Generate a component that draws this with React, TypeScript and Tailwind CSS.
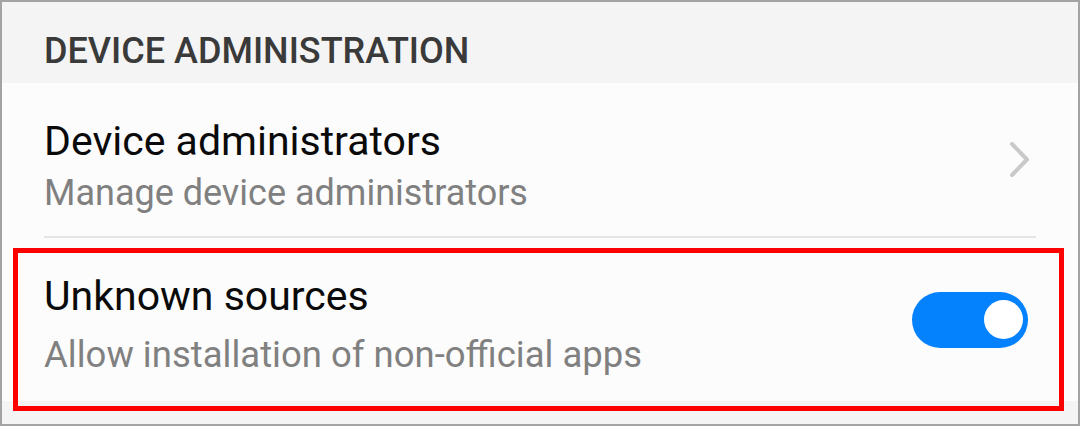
const FONT_CLASSNAME = "font-['Roboto','Noto_Sans',sans-serif]"

const ROW_TITLE_CLASSNAME = 'text-[41px] leading-[48px] text-[#0a0a0a]'

const ROW_SUBTITLE_CLASSNAME = 'leading-[44px] text-[#808080]'

function Chevron() {
  return (
    <svg width="19" height="35" viewBox="0 0 19 35" fill="none" className="mr-[7px] shrink-0">
      <polyline
        points="2,2 17,17.5 2,33"
        stroke="#c9c9c9"
        strokeWidth="4"
        strokeLinecap="round"
        strokeLinejoin="round"
      />
    </svg>
  )
}

function Toggle(props: { on: boolean }) {
  return (
    <div
      className={`mr-[8px] flex h-[56px] w-[116px] shrink-0 items-center rounded-full pr-[5px] ${
        props.on ? 'justify-end bg-[#0481fc]' : 'justify-start bg-[#c8c8c8]'
      }`}
    >
      <div className="h-[39px] w-[39px] rounded-full bg-white" />
    </div>
  )
}

export default function App() {
  return (
    <div
      className={`relative flex h-[426px] w-[1080px] flex-col border-2 border-[#a3a3a3] bg-[#f4f4f4] ${FONT_CLASSNAME}`}
    >
      <div className="h-[81px] shrink-0 pl-[42px] pt-[29px]">
        <h2 className="text-[36px] font-medium leading-[40px] text-[#3a3a3a]">DEVICE ADMINISTRATION</h2>
      </div>

      <div className="shrink-0 bg-[#fcfcfc] px-[42px]">
        <div className="flex h-[155px] items-center justify-between border-b-2 border-[#e4e4e4]">
          <div className="flex flex-col pt-[12px]">
            <div className={ROW_TITLE_CLASSNAME}>Device administrators</div>
            <div className={`${ROW_SUBTITLE_CLASSNAME} mt-[6px] text-[36px]`}>Manage device administrators</div>
          </div>
          <Chevron />
        </div>

        <div className="flex h-[163px] items-center justify-between">
          <div className="flex flex-col pt-[10px]">
            <div className={ROW_TITLE_CLASSNAME}>Unknown sources</div>
            <div className={`${ROW_SUBTITLE_CLASSNAME} mt-[13px] text-[36.5px]`}>
              Allow installation of non-official apps
            </div>
          </div>
          <Toggle on />
        </div>
      </div>

      {/* red annotation box drawn over the second row */}
      <div className="pointer-events-none absolute left-[11px] top-[246px] h-[163px] w-[1051px] border-[5px] border-[#ff0000]" />
    </div>
  )
}
